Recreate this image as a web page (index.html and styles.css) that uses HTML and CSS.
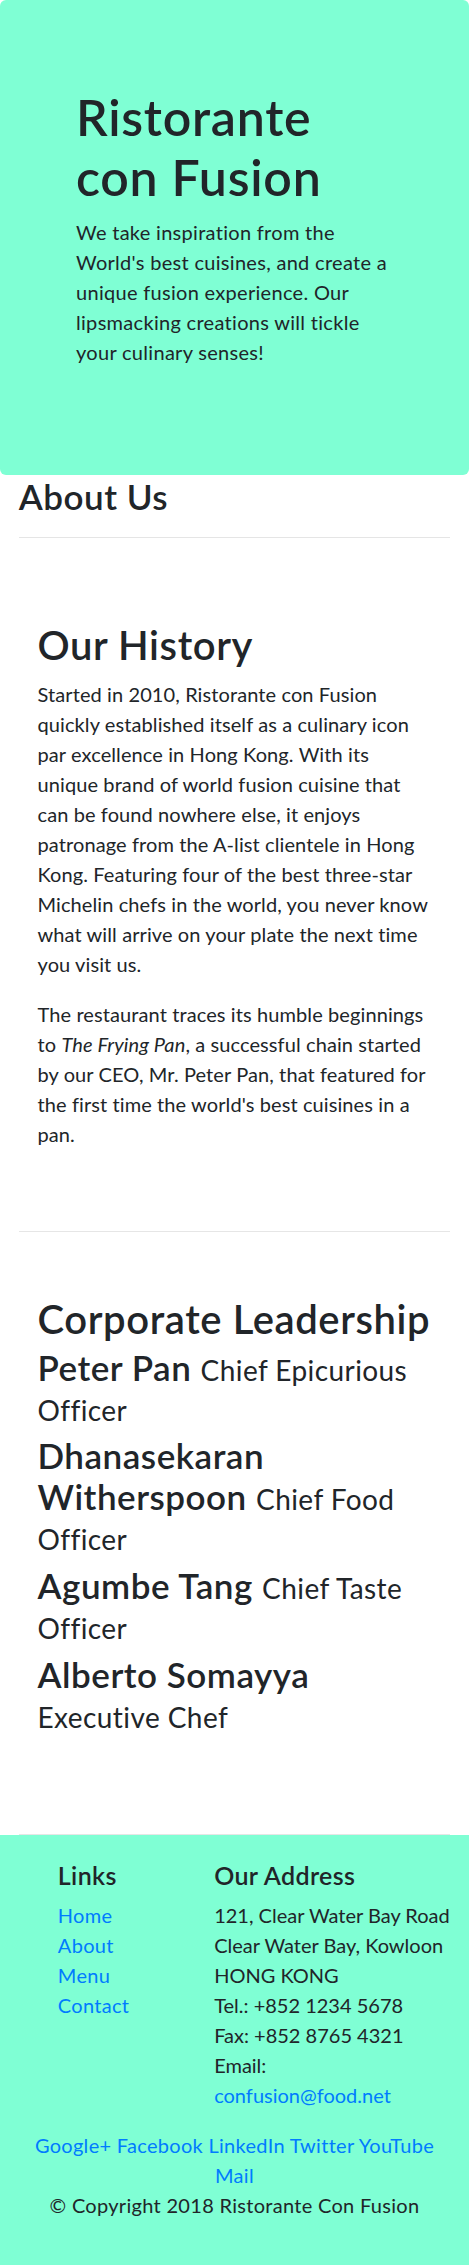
FILE: index.html
```html
<!DOCTYPE html>
<html lang="en">
<head>
<meta charset="utf-8">
<title>Ristorante con Fusion - About Us</title>
<link rel="stylesheet" href="styles.css">
</head>
<body>
<header class="jumbotron">
  <h1 class="brand-title">Ristorante con Fusion</h1>
  <p class="brand-lead">We take inspiration from the World's best cuisines, and create a unique fusion experience. Our lipsmacking creations will tickle your culinary senses!</p>
</header>

<main class="container">
  <div class="page-head">
    <h3 class="page-title">About Us</h3>
    <hr class="rule">
  </div>

  <section class="row-content history">
    <h2 class="section-title">Our History</h2>
    <p class="text">Started in 2010, Ristorante con Fusion quickly established itself as a culinary icon par excellence in Hong Kong. With its unique brand of world fusion cuisine that can be found nowhere else, it enjoys patronage from the A-list clientele in Hong Kong. Featuring four of the best three-star Michelin chefs in the world, you never know what will arrive on your plate the next time you visit us.</p>
    <p class="text">The restaurant traces its humble beginnings to <em>The Frying Pan</em>, a successful chain started by our CEO, Mr. Peter Pan, that featured for the first time the world's best cuisines in a pan.</p>
  </section>

  <section class="row-content leaders">
    <h2 class="section-title leaders-title">Corporate Leadership</h2>
    <ul class="leader-list">
      <li><h3 class="leader">Peter Pan <small>Chief Epicurious Officer</small></h3></li>
      <li><h3 class="leader">Dhanasekaran Witherspoon <small>Chief Food Officer</small></h3></li>
      <li><h3 class="leader">Agumbe Tang <small>Chief Taste Officer</small></h3></li>
      <li><h3 class="leader">Alberto Somayya <small>Executive Chef</small></h3></li>
    </ul>
  </section>
</main>

<footer class="footer">
  <div class="footer-inner">
    <div class="footer-cols">
      <div class="fcol">
        <h5 class="ftitle">Links</h5>
        <ul class="flinks">
          <li><a href="#">Home</a></li>
          <li><a href="#">About</a></li>
          <li><a href="#">Menu</a></li>
          <li><a href="#">Contact</a></li>
        </ul>
      </div>
      <div class="fcol">
        <h5 class="ftitle">Our Address</h5>
        <address class="address">
          121, Clear Water Bay Road<br>
          Clear Water Bay, Kowloon<br>
          HONG KONG<br>
          Tel.: +852 1234 5678<br>
          Fax: +852 8765 4321<br>
          Email:<br>
          <a href="#">confusion@food.net</a>
        </address>
      </div>
    </div>
    <div class="social">
      <a href="#">Google+</a> <a href="#">Facebook</a> <a href="#">LinkedIn</a> <a href="#">Twitter</a> <a href="#">YouTube</a> <a href="#">Mail</a>
    </div>
    <p class="copyright">© Copyright 2018 Ristorante Con Fusion</p>
  </div>
</footer>
</body>
</html>
```

FILE: styles.css
```css
* { box-sizing: border-box; }

body {
  margin: 0;
  font-family: Lato, "Noto Sans", "Liberation Sans", sans-serif;
  font-size: 20px;
  line-height: 1.5;
  color: #212529;
  background: #fff;
}

a { color: #007bff; text-decoration: none; }

/* Jumbotron */
.jumbotron {
  background: #7fffd4;
  border-radius: 6px;
  padding: 87px 76px 88px;
}
.brand-title {
  margin: 0 0 10px;
  font-size: 50px;
  line-height: 1.2;
  font-weight: 600;
  letter-spacing: 0.015em;
}
.brand-lead {
  margin: 0 0 20px;
  letter-spacing: 0.015em;
}

/* Main */
.container {
  padding: 0 18.75px;
}
.page-title {
  margin: 0 0 10px;
  font-size: 35px;
  line-height: 1.2;
  font-weight: 600;
  letter-spacing: 0.015em;
}
.rule {
  margin: 20px 0;
  border: 0;
  border-top: 1px solid rgba(0, 0, 0, 0.1);
}

.row-content {
  padding: 62.5px 18.75px;
  border-bottom: 1px solid #e6e6e6;
}
.section-title {
  margin: 0 0 10px;
  font-size: 40px;
  line-height: 1.2;
  font-weight: 600;
  letter-spacing: 0.015em;
}
.text {
  margin: 0 0 20px;
  letter-spacing: 0.1px;
}

.leaders {
  padding-bottom: 62.5px;
}
.leaders-title {
  margin-bottom: 4px;
}
.leader-list {
  list-style: none;
  margin: 0 0 37px;
  padding: 0;
}
.leader {
  margin: 0 0 8px;
  font-size: 35px;
  line-height: 1.157;
  font-weight: 600;
  letter-spacing: 0.015em;
}
.leader-list li:last-child .leader { margin-bottom: 0; }
.leader small {
  font-size: 28px;
  font-weight: 400;
  letter-spacing: 0.015em;
}

/* Footer */
.footer {
  background: #7fffd4;
  padding: 25px 0;
}
.footer-inner {
  padding: 0 18.75px;
}
.footer-cols {
  display: grid;
  grid-template-columns: 156.33px 273.58px;
  margin: 0 -18.75px;
  padding-left: 39.08px;
}
.fcol {
  padding: 0 18.75px;
}
.ftitle {
  margin: 0 0 10px;
  font-size: 25px;
  line-height: 1.2;
  font-weight: 600;
  letter-spacing: 0.015em;
}
.flinks {
  list-style: none;
  margin: 0;
  padding: 0;
  letter-spacing: 0.015em;
}
.address {
  font-style: normal;
  margin: 0 0 20px;
}
.social {
  text-align: center;
  letter-spacing: 0.015em;
}
.copyright {
  text-align: center;
  margin: 0 0 20px;
  letter-spacing: 0.015em;
}
```
